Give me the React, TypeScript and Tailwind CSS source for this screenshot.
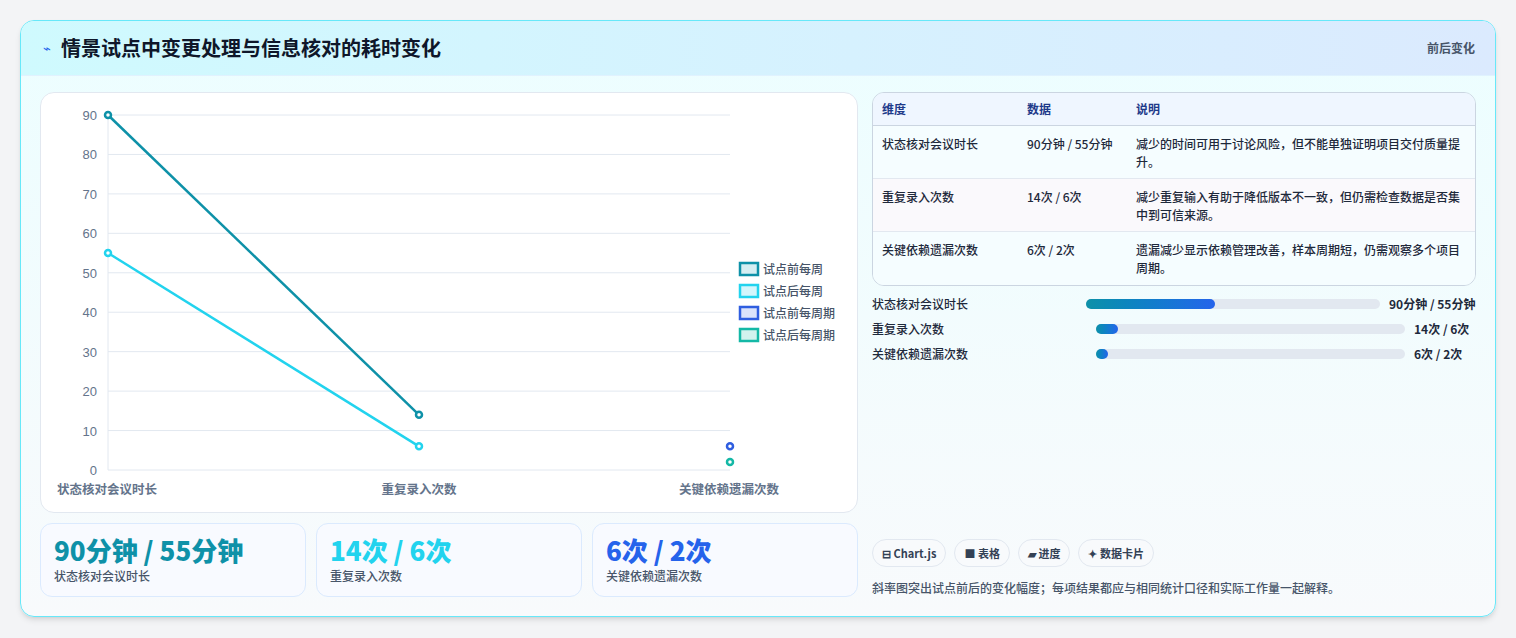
const F = { fontFamily: '"Noto Sans CJK SC", "Noto Sans", sans-serif' };

function Chart() {
  const x0 = 67, x1 = 378, x2 = 689;
  const y = (v: number) => 377 - (v / 90) * 355;
  const ticks = [0, 10, 20, 30, 40, 50, 60, 70, 80, 90];
  const legend = [
    { t: "试点前每周", s: "#0e91a8", f: "#d5eef2" },
    { t: "试点后每周", s: "#22d3ee", f: "#d3f6fc" },
    { t: "试点前每周期", s: "#2f5ee0", f: "#dbe3fb" },
    { t: "试点后每周期", s: "#14b8a6", f: "#d1f3ee" },
  ];
  return (
    <svg width="817" height="420" viewBox="0 0 817 420" style={{ fontFamily: '"Liberation Sans", "Noto Sans CJK SC", sans-serif' }}>
      {ticks.map((t) => (
        <g key={t}>
          <line x1={x0} x2={x2} y1={y(t)} y2={y(t)} stroke="#e2e8f0" />
          <text x={56} y={y(t) + 5} fontSize="13" fill="#64748b" textAnchor="end">{t}</text>
        </g>
      ))}
      <line x1={x0} x2={x0} y1={22} y2={377} stroke="#e2e8f0" />
      <line x1={x0} x2={x1} y1={y(90)} y2={y(14)} stroke="#0e91a8" strokeWidth="2.5" />
      <line x1={x0} x2={x1} y1={y(55)} y2={y(6)} stroke="#22d3ee" strokeWidth="2.5" />
      {[
        [x0, 90, "#0e91a8"], [x1, 14, "#0e91a8"], [x0, 55, "#22d3ee"], [x1, 6, "#22d3ee"], [x2, 6, "#2f5ee0"], [x2, 2, "#14b8a6"],
      ].map(([cx, v, c], i) => (
        <circle key={i} cx={cx as number} cy={y(v as number)} r="3" fill="#fff" stroke={c as string} strokeWidth="2.5" />
      ))}
      {[["状态核对会议时长", x0 - 1], ["重复录入次数", x1], ["关键依赖遗漏次数", x2 - 1]].map(([t, cx]) => (
        <text key={t as string} x={cx as number} y={401} fontSize="12.5" fontWeight="bold" fill="#64748b" textAnchor="middle" style={F}>{t}</text>
      ))}
      {legend.map((l, i) => (
        <g key={l.t}>
          <rect x={699} y={170 + i * 22} width={18} height={12} fill={l.f} stroke={l.s} strokeWidth="2.5" />
          <text x={722} y={181 + i * 22} fontSize="12" fontWeight="500" fill="#475569" style={F}>{l.t}</text>
        </g>
      ))}
    </svg>
  );
}

const rows = [
  ["状态核对会议时长", "90分钟 / 55分钟", "减少的时间可用于讨论风险，但不能单独证明项目交付质量提升。"],
  ["重复录入次数", "14次 / 6次", "减少重复输入有助于降低版本不一致，但仍需检查数据是否集中到可信来源。"],
  ["关键依赖遗漏次数", "6次 / 2次", "遗漏减少显示依赖管理改善，样本周期短，仍需观察多个项目周期。"],
];

export default function App() {
  return (
    <div className="w-[1516px] h-[638px] bg-[#f3f4f6] pt-[20px] px-[20px]" style={F}>
      <div className="w-[1476px] h-[597px] rounded-[14px] border border-[#67e8f9] bg-gradient-to-b from-[#ecfeff] to-[#f8fafc] overflow-hidden shadow-md flex flex-col">
        <div className="h-[55px] shrink-0 flex items-center justify-between px-[20px] bg-gradient-to-r from-[#cffafe] to-[#dbeafe] border-b border-[#e0f2fe]">
          <div className="flex items-center gap-[10px]">
            <span className="text-[#2563eb] text-[13px] pl-[2px]">⌁</span>
            <span className="text-[20px] font-bold text-[#0f172a]">情景试点中变更处理与信息核对的耗时变化</span>
          </div>
          <span className="text-[12px] font-bold text-[#475569]">前后变化</span>
        </div>
        <div className="flex gap-[14px] px-[19px] pt-[16px]">
          <div className="w-[818px] flex flex-col gap-[10px]">
            <div className="h-[421px] rounded-[14px] border border-[#e2e8f0] bg-white overflow-hidden">
              <Chart />
            </div>
            <div className="grid grid-cols-3 gap-[10px]">
              {[["90分钟 / 55分钟", "text-[#0e91a8]", "状态核对会议时长"], ["14次 / 6次", "text-[#22d3ee]", "重复录入次数"], ["6次 / 2次", "text-[#2563eb]", "关键依赖遗漏次数"]].map(([v, c, l]) => (
                <div key={l} className="h-[74px] rounded-[12px] border border-[#dbeafe] bg-[#f8faff] px-[13px] pt-[10px]">
                  <div className={`text-[26px] font-black leading-[32px] ${c}`}>{v}</div>
                  <div className="text-[12px] font-medium text-[#475569] mt-[1px]">{l}</div>
                </div>
              ))}
            </div>
          </div>
          <div className="w-[605px] flex flex-col">
            <div className="rounded-[12px] border border-[#cbd5e1] overflow-hidden text-[12px] font-medium text-[#1e293b]">
              <div className="flex h-[33px] items-center bg-[#eff6ff] border-b border-[#cbd5e1] font-bold text-[#1e3a8a]">
                <div className="w-[145px] pl-[9px]">维度</div>
                <div className="w-[109px] pl-[9px]">数据</div>
                <div className="flex-1 pl-[9px]">说明</div>
              </div>
              {rows.map((r, i) => (
                <div key={r[0]} className={`flex h-[53px] pt-[9px] ${i === 1 ? "bg-[#faf9fc]" : "bg-[#f5fdff]"} ${i < 2 ? "border-b border-[#e2e8f0]" : ""}`}>
                  <div className="w-[145px] pl-[9px]">{r[0]}</div>
                  <div className="w-[109px] pl-[9px]">{r[1]}</div>
                  <div className="flex-1 pl-[9px] pr-[8px] leading-[18px]">{r[2]}</div>
                </div>
              ))}
            </div>
            <div className="mt-[9px] flex flex-col gap-[8px] text-[12px] font-medium text-[#1e293b]">
              {[["90分钟 / 55分钟", 214, 294, 44], ["14次 / 6次", 224, 309, 7], ["6次 / 2次", 224, 309, 4]].map(([v, ml, w, p], i) => (
                <div key={i} className="flex items-center h-[17px]">
                  <div className="w-[214px]">{rows[i][0]}</div>
                  <div className="h-[10px] rounded-full bg-[#e2e8f0]" style={{ marginLeft: (ml as number) - 214, width: w as number }}>
                    <div className="h-full rounded-full bg-gradient-to-r from-[#0e91a8] to-[#2563eb]" style={{ width: `${p}%`, minWidth: 10 }} />
                  </div>
                  <div className="ml-[9px] font-bold">{v}</div>
                </div>
              ))}
            </div>
            <div className="mt-auto flex gap-[8px]">
              {["⊟ Chart.js", "■ 表格", "▰ 进度", "✦ 数据卡片"].map((t) => (
                <span key={t} className="h-[28px] px-[9px] flex items-center rounded-full border border-[#e2e8f0] bg-[#f8fafc] text-[11px] font-bold text-[#334155]">{t}</span>
              ))}
            </div>
            <div className="mt-[12px] text-[12px] font-medium text-[#475569]">斜率图突出试点前后的变化幅度；每项结果都应与相同统计口径和实际工作量一起解释。</div>
          </div>
        </div>
      </div>
    </div>
  );
}
